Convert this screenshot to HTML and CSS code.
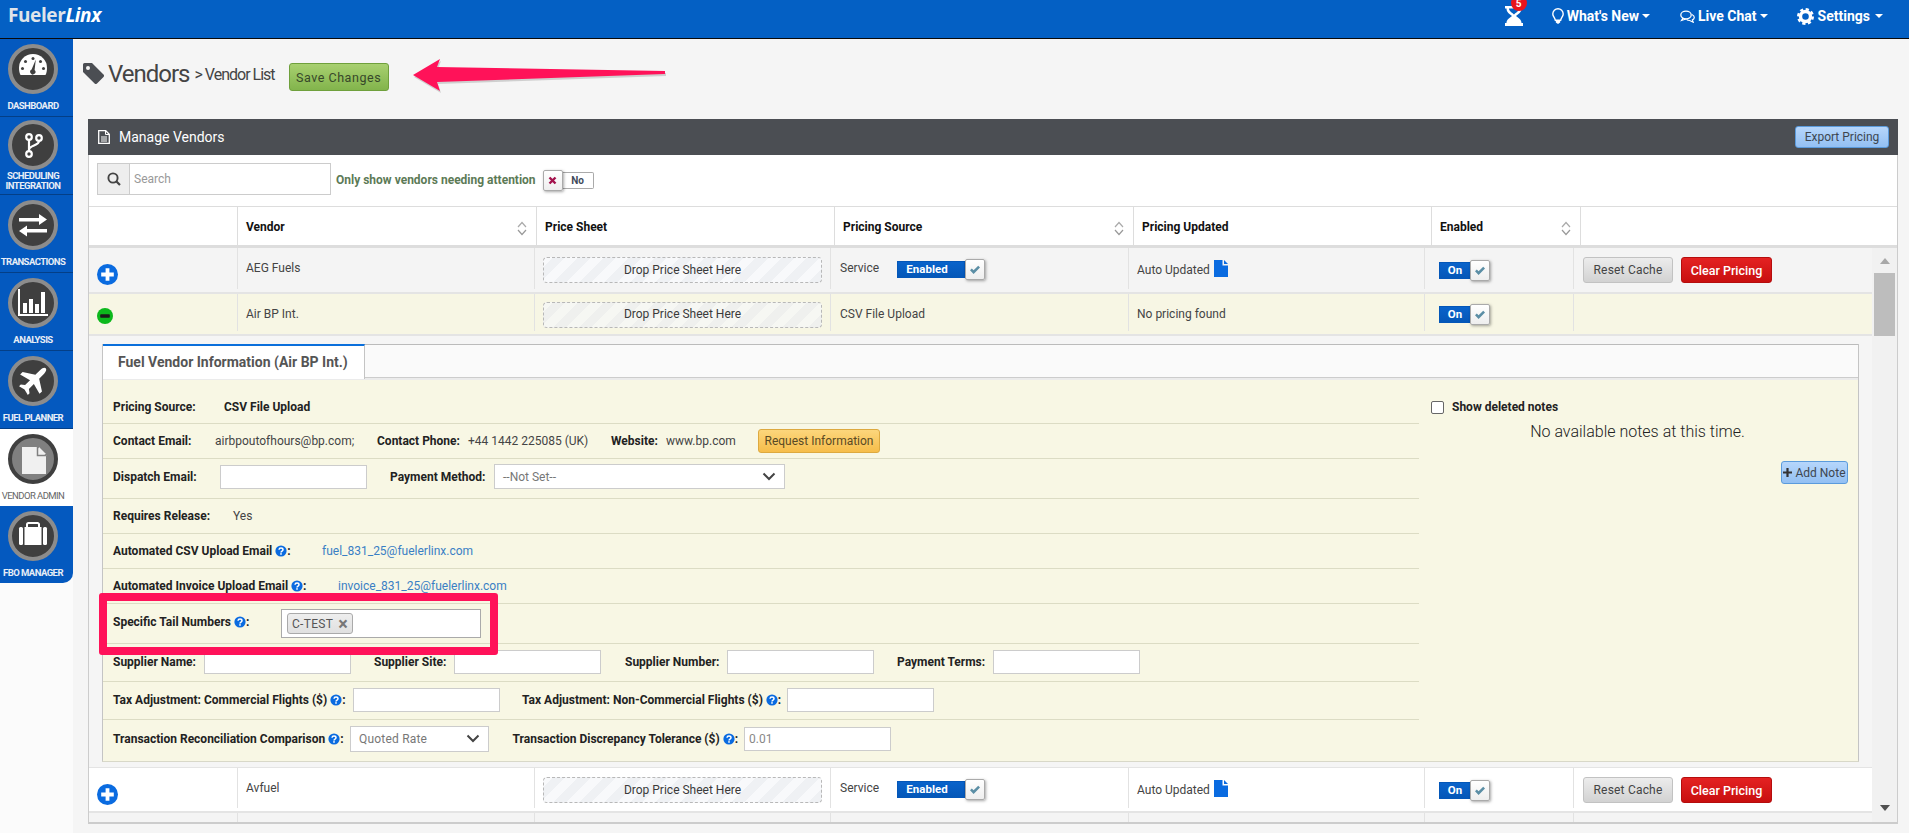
FILE: index.html
```html
<!DOCTYPE html>
<html lang="en">
<head>
<meta charset="utf-8">
<title>Vendors - FuelerLinx</title>
<link rel="stylesheet" href="styles.css">
</head>
<body>
<svg class="sprite" aria-hidden="true">
  <symbol id="i-plus" viewBox="0 0 21 21"><circle cx="10.5" cy="10.5" r="10.5" fill="#0a6be0"/><path d="M8.6 4.2h3.8v4.4h4.4v3.8h-4.4v4.4H8.6v-4.4H4.2V8.6h4.4z" fill="#fff"/></symbol>
  <symbol id="i-minus" viewBox="0 0 16 16"><circle cx="8" cy="8" r="8" fill="#0cb81c"/><rect x="3.2" y="6.3" width="9.6" height="3.4" rx=".8" fill="#1a1a1a"/></symbol>
  <symbol id="i-check" viewBox="0 0 12 10"><path d="M1 5.2 2.8 3.4 4.6 5.2 9.2.8 11 2.6 4.6 9z" fill="#5b8ea5"/></symbol>
  <symbol id="i-q" viewBox="0 0 12 12"><circle cx="6" cy="6" r="5.6" fill="#0a6be0"/><path d="M4 4.7C4.1 3.5 5 3 6 3c1.200 0 2 .7 2 1.700 0 1.500-2 1.400-2 2.800" fill="none" stroke="#fff" stroke-width="1.500"/><rect x="5.200" y="8.200" width="1.600" height="1.500" fill="#fff"/></symbol>
  <symbol id="i-file" viewBox="0 0 14 17"><path d="M0 0h8.500v5.500H14V17H0z" fill="#0a6be0"/><path d="M10 0l4 4h-4z" fill="#0a6be0"/></symbol>
  <symbol id="i-sort" viewBox="0 0 10 15"><path d="M1 6 5 1.500 9 6" fill="none" stroke="#aaa" stroke-width="1.200"/><path d="M1 9l4 4.500L9 9" fill="none" stroke="#999" stroke-width="1.200"/></symbol>
  <symbol id="i-chev" viewBox="0 0 14 9"><path d="M1.500 1.500 7 7l5.500-5.500" fill="none" stroke="#444" stroke-width="2"/></symbol>
</svg>

<header class="topbar">
  <div class="logo">Fueler<em>Linx</em></div>
  <nav class="topnav">
    <div class="hourglass">
      <svg width="18" height="20" viewBox="0 0 18 20"><path d="M0 0h18v2.500h-1.500c0 4-3 5.500-5.500 7.500 2.500 2 5.500 3.500 5.500 7H18v3H0v-3h1.500c0-3.500 3-5 5.500-7-2.500-2-5.500-3.500-5.500-7.500H0z" fill="#fff"/><path d="M4 2.500h10c0 2.500-3 4-5 6-2-2-5-3.500-5-6z" fill="#0460c4"/></svg>
      <span class="badge">5</span>
    </div>
    <a class="navlink nl-new">
      <svg width="12" height="16" viewBox="0 0 12 16"><path d="M6 .8a5.200 5.200 0 0 1 5.200 5.200c0 2.500-2 3.500-2.500 6.200h-5.400C2.800 9.500.8 8.500.8 6A5.200 5.200 0 0 1 6 .8z" fill="none" stroke="#fff" stroke-width="1.400"/><path d="M3.800 12.800h4.400v1.700L6 16l-2.200-1.500z" fill="#fff"/></svg>
      <span>What's New</span><i class="caret"></i>
    </a>
    <a class="navlink nl-chat">
      <svg width="15" height="13" viewBox="0 0 15 13"><ellipse cx="6" cy="5" rx="5.200" ry="3.800" fill="none" stroke="#fff" stroke-width="1.300"/><path d="M3 8 1.500 10.500 6 9M11.800 4.500c1.800.8 2.700 2 2.400 3.300-.2 1-1 1.700-1.800 2.100l.8 2.300-3.500-1.700c-1.200 0-2.600-.5-3.200-1.200" fill="none" stroke="#fff" stroke-width="1.200"/></svg>
      <span>Live Chat</span><i class="caret"></i>
    </a>
    <a class="navlink nl-set">
      <svg width="17" height="17" viewBox="0 0 17 17"><circle cx="8.500" cy="8.500" r="5" fill="none" stroke="#fff" stroke-width="3.400"/><circle cx="8.500" cy="8.500" r="7.300" fill="none" stroke="#fff" stroke-width="2.400" stroke-dasharray="3.200 2.530"/></svg>
      <span>Settings</span><i class="caret caret-set"></i>
    </a>
  </nav>
</header>

<div class="main">
  <aside class="sidebar">
    <a class="side-item">
      <span class="disc"><svg viewBox="0 0 50 50"><path d="M25 10a14 14 0 0 1 14 14c0 2.500-.5 5-1.500 7h-25c-1-2-1.500-4.500-1.500-7a14 14 0 0 1 14-14z" fill="#fff"/><g fill="#3f3f3f"><circle cx="25" cy="14.500" r="1.500"/><circle cx="17.500" cy="17.500" r="1.500"/><circle cx="32.500" cy="17.500" r="1.500"/><circle cx="14.500" cy="24.500" r="1.500"/><circle cx="35.500" cy="24.500" r="1.500"/><path d="M27.800 15.500 26.600 26a2.600 2.600 0 1 1-3-.4z"/></g></svg></span>
      <span class="side-label">DASHBOARD</span>
    </a>
    <a class="side-item side-tight">
      <span class="disc"><svg viewBox="0 0 50 50"><g fill="none" stroke="#fff" stroke-width="2.200"><circle cx="21" cy="17" r="2.800"/><circle cx="31" cy="18" r="2.800"/><circle cx="21" cy="34" r="2.800"/><path d="M21 20v11M31 21c0 5-10 4-10 9"/></g></svg></span>
      <span class="side-label side-two">SCHEDULING<br>INTEGRATION</span>
    </a>
    <a class="side-item">
      <span class="disc"><svg viewBox="0 0 50 50"><path d="M11 18h20v-4l8 5.500-8 5.500v-3.500H11zM39 29H19v-3.500L11 31l8 5.500v-4h20z" fill="#fff"/></svg></span>
      <span class="side-label">TRANSACTIONS</span>
    </a>
    <a class="side-item">
      <span class="disc"><svg viewBox="0 0 50 50"><path d="M10 11h2v25h28v2H10z" fill="#fff"/><path d="M15 25h4v10h-4zM21 21h4v14h-4zM27 26h4v9h-4zM33 14h4v21h-4z" fill="#fff"/></svg></span>
      <span class="side-label">ANALYSIS</span>
    </a>
    <a class="side-item">
      <span class="disc"><svg viewBox="0 0 50 50"><path transform="rotate(45 25 25)" d="M25 7c1.500 0 2.700 2 2.700 5v7l11 7v3.500l-11-3v7l3.500 2.600v2.400l-6.200-1.500-6.200 1.500v-2.400l3.500-2.600v-7l-11 3V26l11-7v-7c0-3 1.200-5 2.700-5z" fill="#fff"/></svg></span>
      <span class="side-label">FUEL PLANNER</span>
    </a>
    <a class="side-item side-active">
      <span class="disc disc-active"><svg viewBox="0 0 50 50"><path d="M14 13h15.500L38 21.500V40H14z" fill="#f0f0f0"/><path d="M31 13l7 7h-7z" fill="#f0f0f0"/><path d="M29.500 13v8.500H38" fill="none" stroke="#808080" stroke-width="1.500"/></svg></span>
      <span class="side-label">VENDOR ADMIN</span>
    </a>
    <a class="side-item side-last">
      <span class="disc"><svg viewBox="0 0 50 50"><path d="M19 17v-3.500a1.500 1.500 0 0 1 1.500-1.500h9a1.500 1.500 0 0 1 1.500 1.500V17" fill="none" stroke="#fff" stroke-width="2"/><rect x="11" y="16" width="4" height="18" rx="1.500" fill="#fff"/><rect x="16.500" y="16" width="17" height="18" fill="#fff"/><rect x="35" y="16" width="4" height="18" rx="1.500" fill="#fff"/></svg></span>
      <span class="side-label">FBO MANAGER</span>
    </a>
  </aside>

  <main class="content">
    <div class="titlebar">
      <svg class="tag" width="21" height="21" viewBox="0 0 21 21"><path d="M0 1.500A1.500 1.500 0 0 1 1.500 0H9l11.500 11.500a1.700 1.700 0 0 1 0 2.400L14 20.500a1.700 1.700 0 0 1-2.400 0L0 9z" fill="#4b4e53"/><circle cx="5" cy="5" r="2" fill="#f5f5f5"/></svg>
      <h1>Vendors</h1>
      <span class="crumb">&gt; Vendor List</span>
      <button class="btn btn-save">Save Changes</button>
    </div>

    <section class="panel">
      <div class="panel-head">
        <svg width="12" height="14" viewBox="0 0 12 14"><path d="M.7.700h7l3.600 3.600v9H.7z" fill="none" stroke="#fff" stroke-width="1.300"/><path d="M7.500 1v3.500H11M3 7h6M3 9h6M3 11h6" fill="none" stroke="#fff"/></svg>
        <span class="panel-title">Manage Vendors</span>
        <button class="btn btn-blue btn-export">Export Pricing</button>
      </div>
      <div class="panel-body">
        <div class="toolbar">
          <div class="search">
            <span class="search-addon"><svg width="14" height="14" viewBox="0 0 14 14"><circle cx="6" cy="6" r="4.600" fill="none" stroke="#444" stroke-width="1.900"/><path d="M9.500 9.500 13 13" stroke="#444" stroke-width="2.200"/></svg></span>
            <input class="search-input" placeholder="Search">
          </div>
          <span class="attention">Only show vendors needing attention</span>
          <span class="tog-no">
            <span class="tog-handle tog-handle-left"><svg width="9" height="9" viewBox="0 0 9 9"><path d="M1.500 1.500l6 6M7.500 1.500l-6 6" stroke="#a3124c" stroke-width="2.400"/></svg></span>
            <span class="tog-no-label">No</span>
          </span>
        </div>

        <div class="thead">
          <div class="th"></div>
          <div class="th">Vendor<svg class="sort"><use href="#i-sort"/></svg></div>
          <div class="th">Price Sheet</div>
          <div class="th">Pricing Source<svg class="sort"><use href="#i-sort"/></svg></div>
          <div class="th">Pricing Updated</div>
          <div class="th">Enabled<svg class="sort"><use href="#i-sort"/></svg></div>
          <div class="th"></div>
        </div>

        <div class="tbody">
          <div class="rows">
            <div class="row row-grey">
              <div class="cell cell-icon"><svg class="ico-plus"><use href="#i-plus"/></svg></div>
              <div class="cell cell-text">AEG Fuels</div>
              <div class="cell"><div class="drop">Drop Price Sheet Here</div></div>
              <div class="cell cell-src">
                <span>Service</span>
                <span class="tog tog-wide"><span class="tog-on">Enabled</span><span class="tog-handle"><svg width="12" height="10"><use href="#i-check"/></svg></span></span>
              </div>
              <div class="cell cell-text">Auto Updated <svg class="ico-file"><use href="#i-file"/></svg></div>
              <div class="cell cell-tog"><span class="tog"><span class="tog-on">On</span><span class="tog-handle"><svg width="12" height="10"><use href="#i-check"/></svg></span></span></div>
              <div class="cell cell-btns"><button class="btn btn-reset">Reset Cache</button><button class="btn btn-clear">Clear Pricing</button></div>
            </div>

            <div class="row row-open">
              <div class="cell cell-icon"><svg class="ico-minus"><use href="#i-minus"/></svg></div>
              <div class="cell cell-text">Air BP Int.</div>
              <div class="cell"><div class="drop">Drop Price Sheet Here</div></div>
              <div class="cell cell-text cell-csv">CSV File Upload</div>
              <div class="cell cell-text">No pricing found</div>
              <div class="cell cell-tog"><span class="tog"><span class="tog-on">On</span><span class="tog-handle"><svg width="12" height="10"><use href="#i-check"/></svg></span></span></div>
              <div class="cell"></div>
            </div>

            <div class="detail">
              <div class="tabs">
                <div class="tabstrip"><div class="tab">Fuel Vendor Information (Air BP Int.)</div></div>
                <div class="tabbody">
                  <div class="info">
                    <div class="ir ir-first r1"><b>Pricing Source:</b><b>CSV File Upload</b></div>
                    <div class="ir r2"><b>Contact Email:</b><span>airbpoutofhours@bp.com;</span><b>Contact Phone:</b><span>+44 1442 225085 (UK)</span><b>Website:</b><span>www.bp.com</span><button class="btn btn-request">Request Information</button></div>
                    <div class="ir ir-40 r3"><b>Dispatch Email:</b><input class="field"><b>Payment Method:</b><div class="select select-pay"><span>--Not Set--</span><svg width="14" height="9"><use href="#i-chev"/></svg></div></div>
                    <div class="ir r4"><b>Requires Release:</b><span>Yes</span></div>
                    <div class="ir r5"><b>Automated CSV Upload Email <svg class="q"><use href="#i-q"/></svg>:</b><a class="link">fuel_831_25@fuelerlinx.com</a></div>
                    <div class="ir r6"><b>Automated Invoice Upload Email <svg class="q"><use href="#i-q"/></svg>:</b><a class="link">invoice_831_25@fuelerlinx.com</a></div>
                    <div class="ir r7"><b>Specific Tail Numbers <svg class="q"><use href="#i-q"/></svg>:</b><div class="tags"><span class="chip">C-TEST <i class="chip-x">×</i></span></div></div>
                    <div class="ir ir-38 r8"><b>Supplier Name:</b><input class="field"><b>Supplier Site:</b><input class="field"><b>Supplier Number:</b><input class="field"><b>Payment Terms:</b><input class="field"></div>
                    <div class="ir ir-38 r9"><b>Tax Adjustment: Commercial Flights ($) <svg class="q"><use href="#i-q"/></svg>:</b><input class="field"><b>Tax Adjustment: Non-Commercial Flights ($) <svg class="q"><use href="#i-q"/></svg>:</b><input class="field"></div>
                    <div class="ir ir-last r10"><b>Transaction Reconciliation Comparison <svg class="q"><use href="#i-q"/></svg>:</b><div class="select select-rate"><span>Quoted Rate</span><svg width="14" height="9"><use href="#i-chev"/></svg></div><b>Transaction Discrepancy Tolerance ($) <svg class="q"><use href="#i-q"/></svg>:</b><input class="field" value="0.01"></div>
                  </div>
                  <div class="notes">
                    <label class="show-deleted"><span class="check"></span><b>Show deleted notes</b></label>
                    <p class="no-notes">No available notes at this time.</p>
                    <button class="btn btn-blue btn-note"><svg width="9" height="9" viewBox="0 0 9 9"><path d="M3.400 0h2.200v3.400H9v2.200H5.600V9H3.400V5.600H0V3.400h3.400z" fill="#333"/></svg>Add Note</button>
                  </div>
                </div>
              </div>
            </div>

            <div class="row row-white">
              <div class="cell cell-icon"><svg class="ico-plus"><use href="#i-plus"/></svg></div>
              <div class="cell cell-text">Avfuel</div>
              <div class="cell"><div class="drop">Drop Price Sheet Here</div></div>
              <div class="cell cell-src">
                <span>Service</span>
                <span class="tog tog-wide"><span class="tog-on">Enabled</span><span class="tog-handle"><svg width="12" height="10"><use href="#i-check"/></svg></span></span>
              </div>
              <div class="cell cell-text">Auto Updated <svg class="ico-file"><use href="#i-file"/></svg></div>
              <div class="cell cell-tog"><span class="tog"><span class="tog-on">On</span><span class="tog-handle"><svg width="12" height="10"><use href="#i-check"/></svg></span></span></div>
              <div class="cell cell-btns"><button class="btn btn-reset">Reset Cache</button><button class="btn btn-clear">Clear Pricing</button></div>
            </div>

            <div class="row row-grey row-cut">
              <div class="cell"></div>
              <div class="cell"></div>
              <div class="cell"><div class="drop"></div></div>
              <div class="cell cell-src"><span class="tog tog-wide"><span class="tog-on"></span><span class="tog-handle"></span></span></div>
              <div class="cell"></div>
              <div class="cell cell-tog"><span class="tog"><span class="tog-on"></span><span class="tog-handle"></span></span></div>
              <div class="cell cell-btns"><button class="btn btn-reset"></button><button class="btn btn-clear"></button></div>
            </div>
          </div>
          <div class="scrollbar">
            <i class="sb-up"></i>
            <i class="sb-thumb"></i>
            <i class="sb-down"></i>
          </div>
        </div>
      </div>
    </section>
  </main>
</div>

<svg class="arrow" width="270" height="44" viewBox="0 0 270 44"><path d="M3 22 30 6l-3 8 228 4v3L27 29l3 9z" fill="#8a8a8a" opacity=".35" transform="translate(1 2)"/><path d="M3 22 30 6l-3 8 228 4v3L27 29l3 9z" fill="#ff1259"/></svg>
<div class="highlight"></div>
</body>
</html>
```

FILE: styles.css
```css
* { box-sizing: border-box; }
html, body { margin: 0; height: 835px; overflow: hidden; }
body {
  position: relative;
  background: #fff;
  font-family: Roboto, "Liberation Sans", sans-serif;
  font-size: 12px;
  line-height: 16px;
  color: #333;
}
.sprite { position: absolute; width: 0; height: 0; }
b { font-weight: 700; }
button { font-family: inherit; }

/* top bar */
.topbar {
  height: 39px;
  background: #0460c4;
  border-bottom: 1px solid #0a0a0a;
  display: flex;
  justify-content: space-between;
  align-items: flex-start;
  padding: 0 26px 0 8px;
}
.logo {
  font-family: "Open Sans", Roboto, sans-serif;
  font-weight: 700;
  font-size: 19px;
  line-height: 30px;
  color: #dfe4ea;
  letter-spacing: -.4px;
}
.logo em { color: #fff; font-style: italic; }
.topnav { display: flex; align-items: flex-start; }
.hourglass { position: relative; width: 18px; height: 26px; margin-top: 6px; margin-right: 29px; }
.badge {
  position: absolute;
  top: -11px;
  left: 6px;
  width: 16px;
  height: 16px;
  border-radius: 50%;
  background: #e8141c;
  color: #fff;
  font-size: 10px;
  font-weight: 700;
  line-height: 18px;
  text-align: center;
}
.navlink {
  display: flex;
  align-items: center;
  height: 32px;
  color: #fff;
  font-size: 14px;
  font-weight: 700;
}
.caret {
  width: 0;
  height: 0;
  border: 4.500px solid transparent;
  border-top-color: #fff;
  border-bottom: 0;
  margin-left: 3px;
}
.caret-set { margin-left: 5px; }
.nl-new svg { margin-right: 3px; }
.nl-chat { margin-left: 30px; }
.nl-chat svg { margin-right: 3px; }
.nl-set { margin-left: 29px; }
.nl-set svg { margin-right: 4px; }

/* layout */
.main { display: flex; height: 794px; background: #f5f5f5; }
.sidebar { width: 73px; flex: none; background: #fbfbfb; }
.side-item {
  display: flex;
  flex-direction: column;
  align-items: center;
  height: 78px;
  padding: 5px 7px 0 0;
  background: #0459bf;
  border-bottom: 1px solid #043f87;
  color: #e8eef6;
}
.side-tight { padding-top: 3px; }
.side-active { background: #fff; color: #666; border-bottom: 0; height: 77px; }
.side-active .side-label { font-weight: 400; }
.side-last { height: 77px; border-bottom: 0; border-bottom-right-radius: 10px; }
.disc {
  width: 50px;
  height: 50px;
  flex: none;
  border-radius: 50%;
  background: #3f3f3f;
  border: 4px solid #8c8c8c;
  position: relative;
  overflow: hidden;
}
.disc svg { position: absolute; left: -4px; top: -4px; width: 50px; height: 50px; }
.disc-active { background: #808080; border-color: #3f3f3f; }
.side-label {
  font-size: 9.500px;
  font-weight: 700;
  line-height: 10px;
  letter-spacing: -.55px;
  text-align: center;
  white-space: nowrap;
  margin-top: 7px;
}
.side-two { margin-top: 1px; }

.content { flex: 1; min-width: 0; padding: 0 11px 0 10px; }
.titlebar { height: 80px; display: flex; align-items: flex-start; padding-top: 24px; }
.tag { flex: none; }
.titlebar h1 {
  margin: -5px 0 0 4px;
  font-size: 24px;
  line-height: 32px;
  font-weight: 400;
  letter-spacing: -1px;
  color: #444;
}
.crumb {
  margin: -2px 0 0 5px;
  font-size: 16px;
  line-height: 28px;
  letter-spacing: -1px;
  color: #444;
}
.btn {
  display: inline-flex;
  align-items: center;
  justify-content: center;
  border-radius: 3px;
  padding: 0;
  font-size: 12px;
  white-space: nowrap;
}
.btn-save {
  width: 100px;
  height: 28px;
  margin: 0 0 0 14px;
  background: linear-gradient(#a8d070, #82b44c);
  border: 1px solid #6fa03c;
  color: #37482a;
  font-size: 12.500px;
  letter-spacing: .55px;
}
.btn-blue {
  background: linear-gradient(#b6d6fb, #93c0f3);
  border: 1px solid #5b9bdc;
  color: #3d4650;
}

/* panel */
.panel { margin-left: 5px; height: 705px; display: flex; flex-direction: column; }
.panel-head {
  height: 36px;
  flex: none;
  background: #4b4e53;
  display: flex;
  align-items: center;
  padding: 0 9px 0 10px;
  color: #fff;
}
.panel-title { margin: -1px 0 0 9px; font-size: 14px; }
.btn-export { margin-left: auto; width: 94px; height: 22px; }
.panel-body {
  flex: 1;
  min-height: 0;
  display: flex;
  flex-direction: column;
  border: 1px solid #ccc;
  border-top: 0;
  border-bottom-width: 2px;
}
.toolbar {
  height: 51px;
  flex: none;
  background: #fff;
  display: flex;
  align-items: flex-start;
  padding: 8px 0 0 8px;
}
.search { display: flex; width: 234px; height: 32px; border: 1px solid #ccc; }
.search-addon {
  width: 32px;
  background: #eee;
  border-right: 1px solid #ccc;
  display: flex;
  align-items: center;
  justify-content: center;
}
.search-input {
  flex: 1;
  min-width: 0;
  border: 0;
  padding: 0 4px;
  font: inherit;
  outline: 0;
}
.search-input::placeholder { color: #999; opacity: 1; }
.attention { margin: 9px 0 0 5px; font-weight: 700; color: #5c7a56; white-space: nowrap; }
.tog-no { display: flex; align-items: center; margin: 7px 0 0 7px; }
.tog-no-label {
  width: 31px;
  height: 17px;
  background: #fff;
  border: 1px solid #aaa;
  border-left: 0;
  border-radius: 0 2px 2px 0;
  font-size: 10px;
  font-weight: 700;
  line-height: 15px;
  text-align: center;
  color: #3f4a5a;
}
.tog-handle {
  width: 20px;
  height: 21px;
  flex: none;
  background: linear-gradient(#fff, #eee);
  border: 1px solid #aaa;
  border-radius: 2px;
  box-shadow: 1px 1px 3px rgba(0, 0, 0, .35);
  display: flex;
  align-items: center;
  justify-content: center;
  position: relative;
}

.thead {
  height: 42px;
  flex: none;
  background: #fff;
  display: grid;
  grid-template-columns: 149px 299px 298px 299px 298px 149px 1fr;
  border-top: 1px solid #ddd;
  border-bottom: 3px solid #ddd;
}
.th {
  position: relative;
  padding: 12px 8px 0;
  font-weight: 700;
  color: #111;
  border-right: 1px solid #ddd;
}
.th:last-child { border-right: 0; }
.sort { position: absolute; right: 9px; top: 14px; width: 10px; height: 15px; }

.tbody { flex: 1; min-height: 0; display: flex; background: #f2f2f2; }
.rows { width: 1783px; flex: none; overflow: hidden; }
.row {
  display: grid;
  grid-template-columns: 149px 297px 296px 298px 296px 149px 1fr;
  height: 46px;
  border-bottom: 2px solid #e4e4e4;
}
.row-grey { background: #f4f4f4; }
.row-white { background: #fff; border-top: 1px solid #e4e4e4; }
.row-open { background: #f7f6e4; height: 42px; }
.row-cut { height: 40px; }
.cell { padding: 9px 8px 0; border-right: 1px solid #e2e2e2; margin-bottom: 3px; }
.cell:last-child { border-right: 0; }
.cell-text { padding-top: 12px; white-space: nowrap; color: #444; }
.cell-icon { padding: 16px 0 0 8px; }
.cell-src { padding: 11px 0 0 9px; display: flex; align-items: flex-start; white-space: nowrap; color: #444; }
.cell-csv { padding-left: 9px; }
.cell-src > span:first-child:not(.tog) { width: 57px; padding-top: 1px; }
.cell-tog { padding: 12px 0 0 14px; }
.cell-btns { padding: 9px 0 0 9px; display: flex; align-items: flex-start; gap: 8px; }
.ico-plus { display: block; width: 21px; height: 21px; }
.ico-minus { display: block; width: 16px; height: 16px; margin-top: -2px; }
.ico-file { width: 14px; height: 17px; vertical-align: -3px; margin-left: 1px; }
.row-open .drop { margin-top: -1px; line-height: 22px; }
.row-open .tog { margin-top: -2px; }

.drop {
  width: 279px;
  height: 26px;
  border: 1px dashed #b8b8b8;
  border-radius: 4px;
  background: repeating-linear-gradient(-45deg, #eff1f4 0 9px, #f8f9fb 9px 18px);
  text-align: center;
  line-height: 24px;
  color: #3a3a3a;
}
.row-open .drop { background: repeating-linear-gradient(-45deg, #eff0ee 0 9px, #f6f7f3 9px 18px); }

.tog { display: flex; align-items: center; width: 52px; height: 21px; }
.tog-on {
  width: 32px;
  height: 17px;
  flex: none;
  background: linear-gradient(#0a64cc, #0457b8);
  border-bottom: 1px solid #fff;
  outline: 1px solid #0457b8;
  outline-offset: -1px;
  color: #fff;
  font-size: 11.500px;
  font-weight: 700;
  line-height: 16px;
  text-align: center;
}
.tog .tog-handle { margin-left: -1px; }
.tog-wide { width: 87px; }
.tog-wide .tog-on { width: 68px; padding-right: 8px; }
.tog-wide .tog-handle { margin-left: 0; }

.btn-reset {
  width: 90px;
  height: 26px;
  background: linear-gradient(#ececec, #d2d2d2);
  border: 1px solid #c2c2c2;
  color: #444;
  letter-spacing: .2px;
}
.btn-clear {
  width: 91px;
  height: 26px;
  background: linear-gradient(#e42222, #c80f0f);
  border: 1px solid #b50d0d;
  color: #fff;
  font-size: 12.500px;
  font-weight: 500;
}

/* detail */
.detail { height: 431px; background: #f5f5f5; padding: 8px 13px 0 13px; border-bottom: 0; }
.tabs { height: 418px; border: 1px solid #c4c4c4; border-top: 0; border-bottom-width: 2px; border-bottom-color: #d8d8c8; }
.tabstrip { height: 36px; background: #fafafa; border-top: 1px solid #bbb; border-bottom: 2px solid #ebebeb; box-shadow: inset 0 -1px 0 #ccc; }
.tab {
  width: 262px;
  height: 35px;
  margin-top: -1px;
  background: #fff;
  border-top: 2px solid #0a6fdb;
  border-right: 1px solid #c4c4c4;
  padding: 0 0 0 15px;
  font-size: 14px;
  line-height: 33px;
  font-weight: 700;
  color: #555;
  white-space: nowrap;
  position: relative;
}
.tabbody { height: 381px; background: #f8f7e4; display: flex; }
.info { width: 1316px; flex: none; }
.ir {
  display: grid;
  align-items: center;
  justify-items: start;
  height: 35px;
  padding-left: 10px;
  border-bottom: 1px solid #dcdcc4;
  white-space: nowrap;
  color: #444;
}
.ir b { color: #222; font-weight: 700; }
.ir-first { height: 44px; padding-top: 10px; }
.ir-40 { height: 40px; padding-bottom: 4px; }
.ir-38 { height: 38px; padding-bottom: 2px; }
.ir-last { height: 41px; padding-bottom: 4px; border-bottom: 0; }
.r1 { grid-template-columns: 111px auto; }
.r2 { grid-template-columns: 102px 162px 91px 143px 55px 92px auto; }
.r3 { grid-template-columns: 107px 170px 104px 291px; }
.r4 { grid-template-columns: 120px auto; }
.r5 { grid-template-columns: 209px auto; }
.r6 { grid-template-columns: 225px auto; }
.r7 { grid-template-columns: 168px 200px; height: 40px; }
.r7 b { margin-bottom: 3px; }
.r8 { grid-template-columns: 91px 170px 80px 171px 102px 170px 96px 147px; }
.r9 { grid-template-columns: 239.500px 169.500px 265px 147px; }
.r10 { grid-template-columns: 237px 162.500px 231.500px 147px; }
.q { width: 12px; height: 12px; vertical-align: -2px; }
.link { color: #3a7fc4; }
.field {
  width: 147px;
  height: 24px;
  border: 1px solid #ccc;
  background: #fff;
  padding: 0 4px;
  font: inherit;
  color: #888;
  outline: 0;
}
.select {
  display: flex;
  align-items: center;
  justify-content: space-between;
  height: 26px;
  background: #fff;
  border: 1px solid #ccc;
  padding: 0 8px;
  color: #777;
}
.select-pay { width: 291px; height: 25px; }
.select-rate { width: 139px; letter-spacing: .2px; }
.tags {
  width: 200px;
  height: 29px;
  background: #fff;
  border: 1px solid #aaa;
  display: flex;
  align-items: center;
  padding-left: 5px;
}
.chip {
  width: 66px;
  height: 21px;
  background: linear-gradient(#eee, #e0e0e0);
  border: 1px solid #aaa;
  border-radius: 3px;
  padding-left: 4px;
  line-height: 19px;
  color: #555;
  letter-spacing: .3px;
}
.chip-x { font-style: normal; font-weight: 700; font-size: 18px; color: #777; margin-left: 2px; vertical-align: -2px; }
.btn-request {
  width: 122px;
  height: 24px;
  background: linear-gradient(#fcd67c, #f6bd4a);
  border: 1px solid #dda93f;
  color: #5a4a24;
}
.notes { flex: 1; position: relative; padding: 20px 10px 0 12px; }
.show-deleted { display: flex; align-items: center; height: 14px; color: #222; }
.check {
  width: 13px;
  height: 13px;
  background: #fff;
  border: 1px solid #666;
  border-radius: 2px;
  margin-right: 8px;
}
.no-notes {
  margin: 8px 0 0;
  font-size: 16px;
  line-height: 20px;
  font-weight: 300;
  text-align: center;
  color: #222;
  padding-right: 4px;
}
.btn-note {
  display: flex;
  width: 67px;
  height: 23px;
  margin: 19px 0 0 auto;
  gap: 3px;
}

/* scrollbar */
.scrollbar { width: 25px; flex: none; background: #f1f1f1; display: flex; flex-direction: column; align-items: center; }
.sb-up, .sb-down { width: 0; height: 0; border: 5.500px solid transparent; }
.sb-up { border-bottom: 6px solid #a8a8a8; border-top: 0; margin-top: 10px; }
.sb-thumb { width: 21px; height: 63px; background: #bdbdbd; margin-top: 9px; }
.sb-down { border-top: 6px solid #505050; border-bottom: 0; margin-top: auto; margin-bottom: 11px; }

/* annotations drawn over the screenshot */
.arrow { position: absolute; left: 410px; top: 53px; }
.highlight {
  position: absolute;
  left: 99px;
  top: 593px;
  width: 399px;
  height: 62px;
  border: 8px solid #ff1259;
  border-radius: 3px;
}
```
